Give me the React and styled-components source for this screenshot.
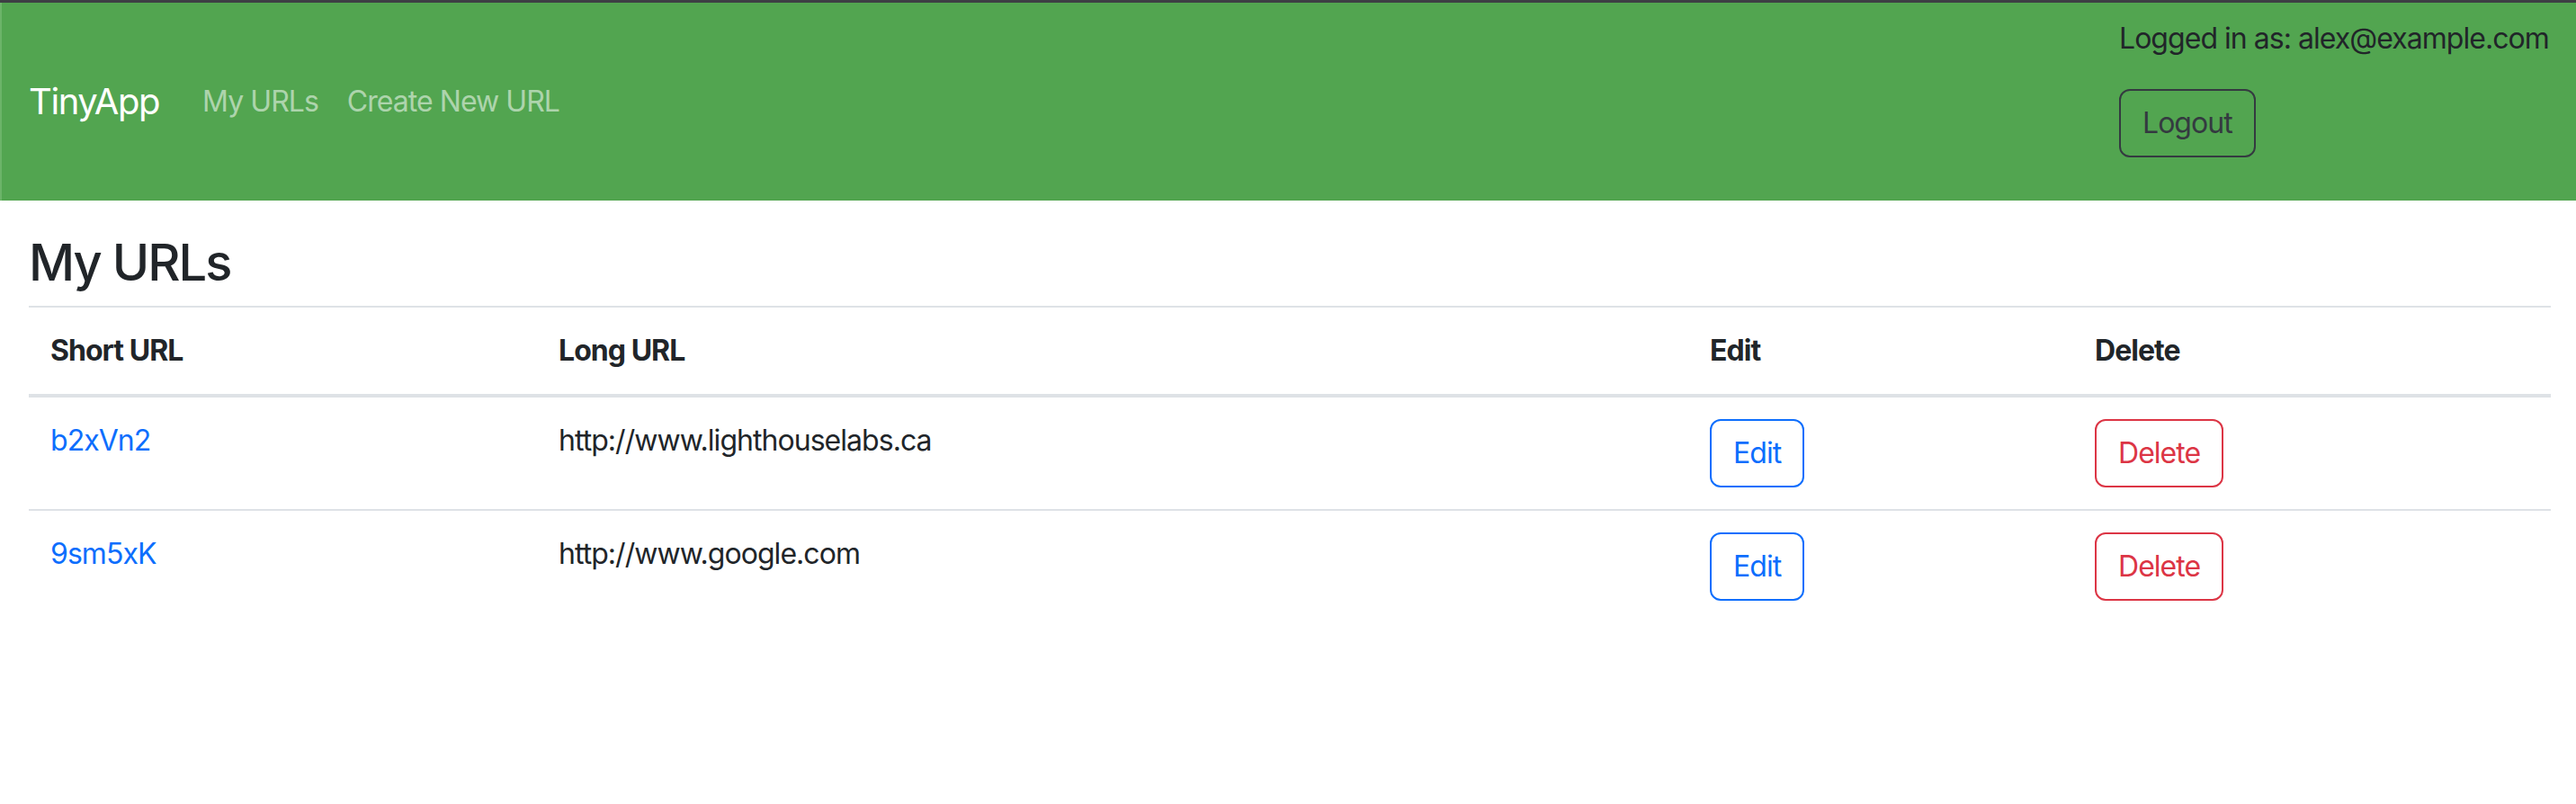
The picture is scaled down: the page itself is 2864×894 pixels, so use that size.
import React from "react";
import styled, { createGlobalStyle } from "styled-components";

const GlobalStyle = createGlobalStyle`
  body {
    margin: 0;
    font-family: Inter, "Liberation Sans", sans-serif;
    font-size: 32px;
    line-height: 1.5;
    letter-spacing: -0.03em;
    color: #212529;
    background: #fff;
  }
`;

const Page = styled.div`
  border-top: 3px solid #3d3f44;
`;

const Navbar = styled.nav`
  display: flex;
  align-items: center;
  justify-content: space-between;
  background: #52a550;
  padding: 16px 28px 16px 32px;
  border-left: 2px solid #6cb469;
`;

const NavLeft = styled.div`
  display: flex;
  align-items: center;
`;

const Brand = styled.a`
  font-size: 40px;
  letter-spacing: -0.035em;
  color: #fff;
  margin-right: 32px;
  text-decoration: none;
  margin-left: -2px;
`;

const NavLink = styled.a`
  padding: 0 16px;
  color: rgba(255, 255, 255, 0.55);
  text-decoration: none;
`;

const UserBox = styled.div`
  display: flex;
  flex-direction: column;
  align-items: flex-start;
  width: 480px;
`;

const LoggedIn = styled.span`
  white-space: nowrap;
`;

const LogoutButton = styled.button`
  margin: 32px 0;
  padding: 12px 24px;
  font: inherit;
  letter-spacing: inherit;
  color: #343a40;
  background: transparent;
  border: 2px solid #343a40;
  border-radius: 12px;
`;

const Main = styled.main`
  padding: 0 28px 0 32px;
`;

const Heading = styled.h3`
  font-size: 56px;
  font-weight: 500;
  line-height: 1.2;
  letter-spacing: -0.035em;
  margin: 36px 0 14px;
`;

const Rule = styled.hr`
  margin: 0;
  border: 0;
  border-top: 2px solid #dee2e6;
`;

const Table = styled.table`
  width: 100%;
  border-collapse: collapse;
  table-layout: fixed;
`;

const Th = styled.th`
  text-align: left;
  font-weight: 700;
  padding: 24px;
  border-bottom: 4px solid #dee2e6;
`;

const Td = styled.td`
  padding: 24px;
  vertical-align: top;
  border-bottom: ${({ $last }) => ($last ? "none" : "2px solid #dee2e6")};
`;

const ShortLink = styled.a`
  color: #0d6efd;
  text-decoration: none;
`;

const OutlineButton = styled.button`
  padding: 12px 24px;
  font: inherit;
  letter-spacing: inherit;
  color: ${({ $color }) => $color};
  background: transparent;
  border: 2px solid ${({ $color }) => $color};
  border-radius: 12px;
`;

const urls = [
  { id: "b2xVn2", longURL: "http://www.lighthouselabs.ca" },
  { id: "9sm5xK", longURL: "http://www.google.com" },
];

export default function App() {
  return (
    <Page>
      <GlobalStyle />
      <Navbar>
        <NavLeft>
          <Brand href="#">TinyApp</Brand>
          <NavLink href="#">My URLs</NavLink>
          <NavLink href="#">Create New URL</NavLink>
        </NavLeft>
        <UserBox>
          <LoggedIn>Logged in as: alex@example.com</LoggedIn>
          <LogoutButton>Logout</LogoutButton>
        </UserBox>
      </Navbar>
      <Main>
        <Heading>My URLs</Heading>
        <Rule />
        <Table>
          <colgroup>
            <col style={{ width: 565 }} />
            <col style={{ width: 1280 }} />
            <col style={{ width: 428 }} />
            <col />
          </colgroup>
          <thead>
            <tr>
              <Th>Short URL</Th>
              <Th>Long URL</Th>
              <Th>Edit</Th>
              <Th>Delete</Th>
            </tr>
          </thead>
          <tbody>
            {urls.map((u, i) => {
              const last = i === urls.length - 1;
              return (
                <tr key={u.id}>
                  <Td $last={last}>
                    <ShortLink href="#">{u.id}</ShortLink>
                  </Td>
                  <Td $last={last}>{u.longURL}</Td>
                  <Td $last={last}>
                    <OutlineButton $color="#0d6efd">Edit</OutlineButton>
                  </Td>
                  <Td $last={last}>
                    <OutlineButton $color="#dc3545">Delete</OutlineButton>
                  </Td>
                </tr>
              );
            })}
          </tbody>
        </Table>
      </Main>
    </Page>
  );
}
